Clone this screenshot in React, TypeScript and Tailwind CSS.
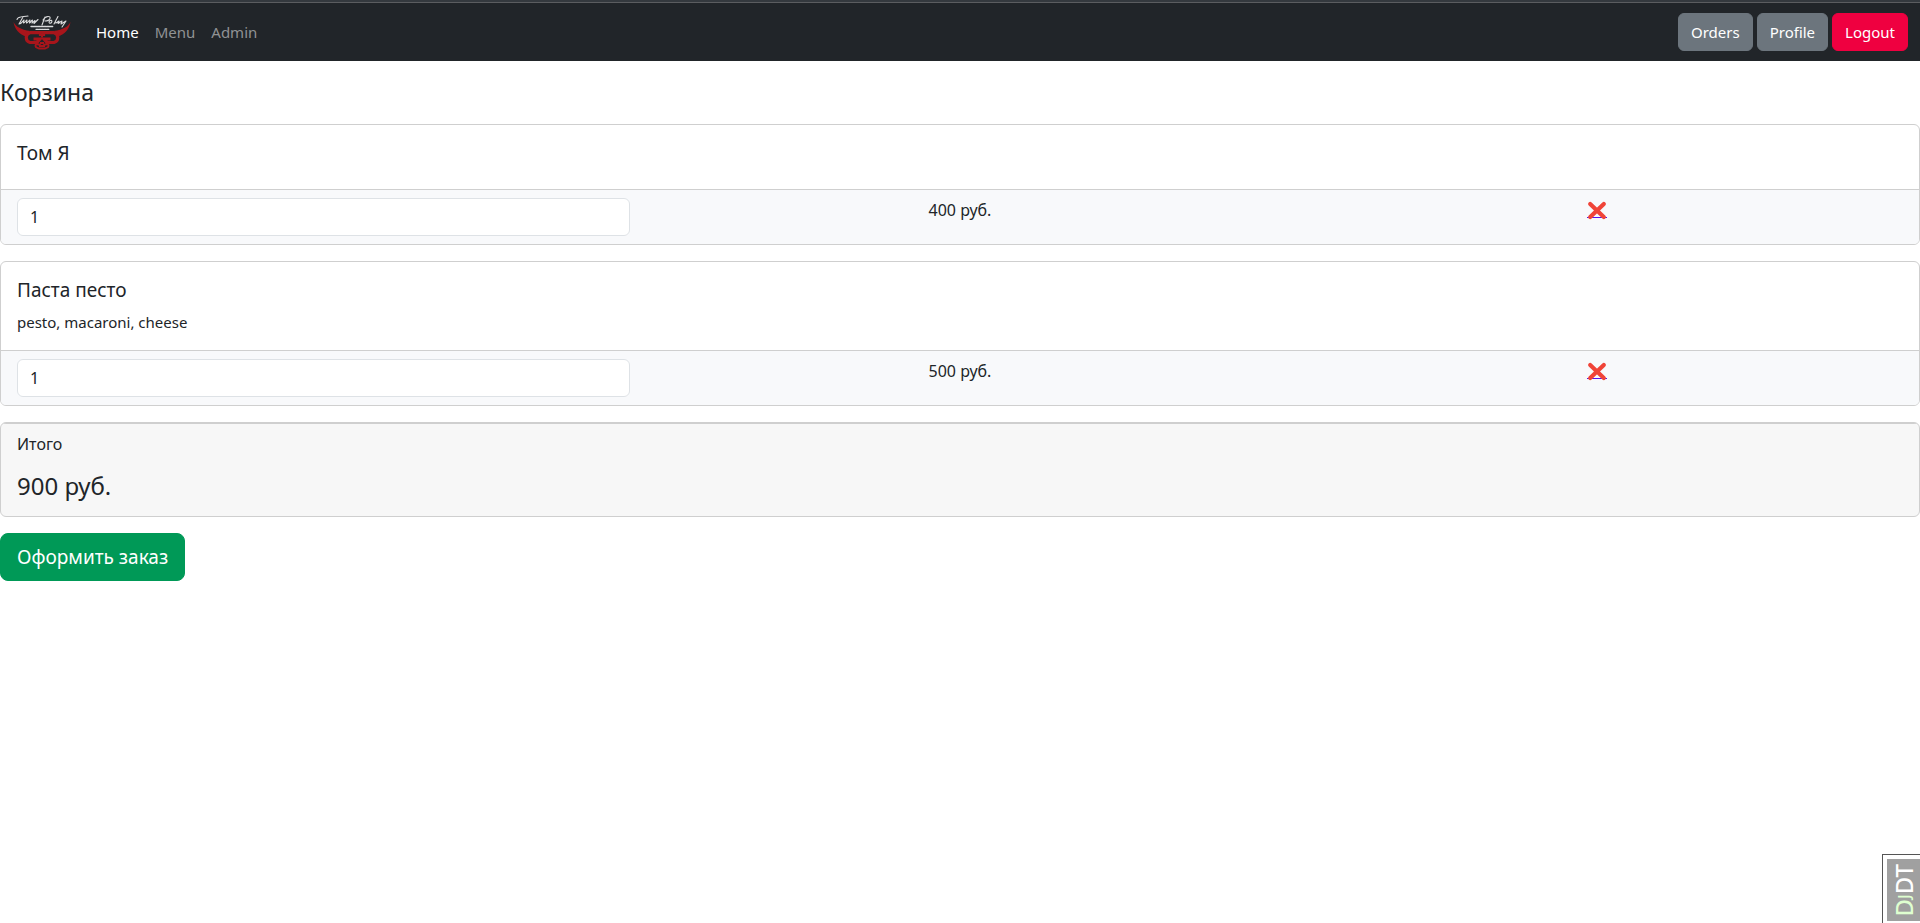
type CartItem = {
  id: number;
  title: string;
  description?: string;
  quantity: number;
  price: number;
};

const items: CartItem[] = [
  { id: 1, title: "Том Я", quantity: 1, price: 400 },
  {
    id: 2,
    title: "Паста песто",
    description: "pesto, macaroni, cheese",
    quantity: 1,
    price: 500,
  },
];

function Logo() {
  return (
    <svg width="60" height="42" viewBox="0 0 60 42" aria-hidden="true">
      {/* lettering strokes above the bull */}
      <g fill="none" stroke="#d9dadb" strokeLinecap="round" strokeLinejoin="round">
        <path
          strokeWidth="1.1"
          d="M5 8.500C6 5 11 6 16 5M11 6L7 13C10 12.500 11 10 12 9L11.500 12C13 12 14 9 15 9L14.500 12C16 12 17 9 18 9L17.500 12C19 11.500 19 9 20.500 9L20 12L23 9.500L22 12.500L26 8.500M33 6L30 14M31 9C34 4 39 5 38 7.500C37 10 34 10 33 10M37 11C38 8.500 41 9 39.500 11.500C38 13 37 12 37 11M42 13L46 5.500C44 9 42 12 44 12L47 10C45 13 46 13 48 11L50 10L49 13L54 10L50 16"
        />
        <path strokeWidth="1.3" strokeDasharray="2.5 0.7" d="M19 15.500H41" />
        <path strokeWidth="1.3" strokeDasharray="2 0.7" d="M24 18.300H37" />
      </g>
      <g fill="#a8151b">
        <path d="M1.500 11C4 16 9 18.500 18 20L14 25.500C7 23 2.500 18 1.500 11Z" />
        <path d="M58.500 11C56 16 51 18.500 42 20L46 25.500C53 23 57.500 18 58.500 11Z" />
      </g>
      <g fill="none" stroke="#a8151b" strokeWidth="3.2">
        <path d="M28.500 25V21.700H18C13 23 13 30 18 31.500H25L28 28H21.500" />
        <path d="M31.500 25V21.700H42C47 23 47 30 42 31.500H35L32 28H38.500" />
        <path strokeWidth="2" d="M29 25H31M28 32H32" />
        <path
          strokeWidth="1.9"
          d="M29 35.500C28 32.500 23 32.500 23.500 35C23.500 37 26 36.500 27 37.500H33C34 36.500 36.500 37 36.500 35C37 32.500 32 32.500 31 35.500M27 35H33"
        />
      </g>
    </svg>
  );
}

function CrossMark() {
  return (
    <svg width="20" height="20" viewBox="0 0 20 20" aria-hidden="true">
      <path stroke="#5511ee" d="M0 17.500H20" />
      <path
        d="M3.200 4L16.800 17M16.800 4L3.200 17"
        stroke="#f04438"
        strokeWidth="4.2"
        strokeLinecap="round"
      />
    </svg>
  );
}

function CartCard({ item }: { item: CartItem }) {
  return (
    <article className="overflow-hidden rounded-md border border-[#cfcfcf] bg-white">
      <div className="p-4">
        <h5 className="mb-2 text-[19px] leading-6">{item.title}</h5>
        {item.description && <p className="text-[15px] leading-6">{item.description}</p>}
      </div>
      <div className="border-t border-[#cfcfcf] bg-[#f8f9fb] px-4 py-2">
        <div className="-mx-3 grid grid-cols-3">
          <div className="px-3">
            <input
              type="text"
              inputMode="numeric"
              aria-label={`Количество: ${item.title}`}
              defaultValue={item.quantity}
              className="block h-[38px] w-full rounded-md border border-[#dee2e6] bg-white px-3 text-base"
            />
          </div>
          <div className="px-3 text-center">{item.price} руб.</div>
          <div className="flex items-start justify-center px-3">
            <a href="#remove" aria-label={`Удалить: ${item.title}`} className="block pt-0.5">
              <CrossMark />
            </a>
          </div>
        </div>
      </div>
    </article>
  );
}

export default function App() {
  const total = items.reduce((sum, item) => sum + item.price * item.quantity, 0);

  return (
    <div className="min-h-screen bg-white font-['Noto_Sans',sans-serif] text-base text-[#212529]">
      <header className="border-t-2 border-[#34393e] bg-[#212529]">
        <nav className="flex items-center border-t border-[#5b5d60] px-3 py-2 text-[15px]">
          <a href="#home" aria-label="Home page" className="mr-6">
            <Logo />
          </a>
          <div className="flex gap-4">
            <a href="#home" className="text-white">Home</a>
            <a href="#menu" className="text-[#909294]">Menu</a>
            <a href="#admin" className="text-[#909294]">Admin</a>
          </div>
          <div className="ml-auto flex gap-1 text-white">
            <button className="h-[38px] rounded-md border border-[#6c757d] bg-[#6c757d] px-3">
              Orders
            </button>
            <button className="h-[38px] rounded-md border border-[#6c757d] bg-[#6c757d] px-3">
              Profile
            </button>
            <button className="h-[38px] rounded-md border border-[#ef0040] bg-[#ef0040] px-3">
              Logout
            </button>
          </div>
        </nav>
      </header>

      <main className="pt-4">
        <h4 className="mb-4 text-[23px] leading-[31px]">Корзина</h4>
        <div className="flex flex-col gap-4">
          {items.map((item) => (
            <CartCard key={item.id} item={item} />
          ))}
          <section className="overflow-hidden rounded-md border border-[#cfcfcf] bg-[#f7f7f7]">
            <div className="border-t border-[#cfcfcf] px-4 pt-2 pb-4">
              <p className="mb-4">Итого</p>
              <h4 className="text-2xl leading-7">{total} руб.</h4>
            </div>
          </section>
          <button className="h-12 self-start rounded-lg border border-[#009957] bg-[#009957] px-4 text-[19px] text-white">
            Оформить заказ
          </button>
        </div>
      </main>

      <aside className="fixed right-0 bottom-0 border-t border-l border-[#555] bg-white pt-1 pb-0.5 pl-1">
        <button
          aria-label="Toggle debug toolbar"
          className="flex h-[62px] w-[33px] items-center justify-center bg-[#a0a0a0] text-2xl font-medium text-white"
        >
          <span className="rotate-180 [writing-mode:vertical-rl]">
            <span className="text-[#dfffd0]">
              D<span className="text-base">J</span>
            </span>
            DT
          </span>
        </button>
      </aside>
    </div>
  );
}
